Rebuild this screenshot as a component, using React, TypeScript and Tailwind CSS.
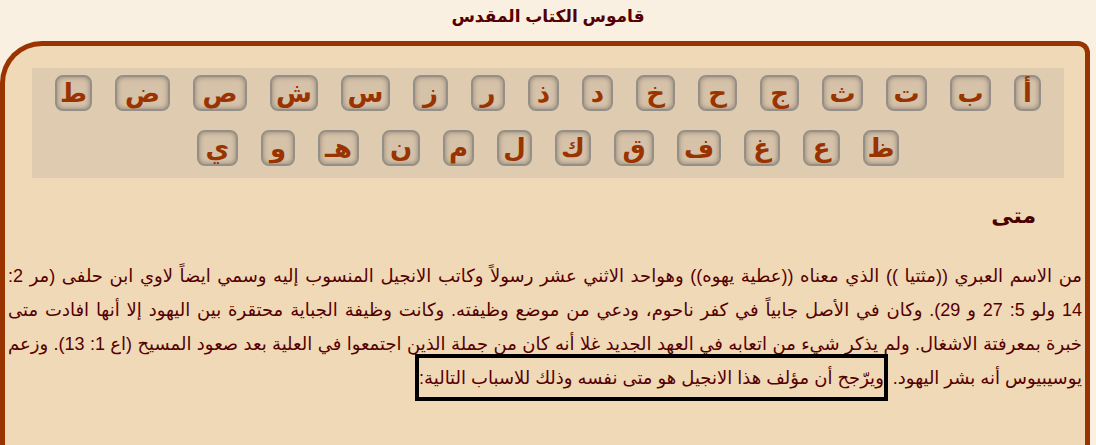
const row1: [string, number][] = [
  ["أ", 27],
  ["ب", 41],
  ["ت", 41],
  ["ث", 41],
  ["ج", 39],
  ["ح", 39],
  ["خ", 39],
  ["د", 31],
  ["ذ", 31],
  ["ر", 34],
  ["ز", 35],
  ["س", 49],
  ["ش", 48],
  ["ص", 54],
  ["ض", 55],
  ["ط", 37],
];

const row2: [string, number][] = [
  ["ظ", 36],
  ["ع", 37],
  ["غ", 36],
  ["ف", 44],
  ["ق", 40],
  ["ك", 36],
  ["ل", 35],
  ["م", 31],
  ["ن", 38],
  ["هـ", 41],
  ["و", 34],
  ["ي", 41],
];

function LetterRow({ letters }: { letters: [string, number][] }) {
  return (
    <div dir="rtl" className="flex justify-center gap-[23px]">
      {letters.map(([ch, w]) => (
        <a
          key={ch}
          href="#"
          style={{ width: w }}
          className="flex h-[36px] items-center justify-center rounded-[8px] border-2 border-[#959087] bg-[#d6c2a9] text-[26px] font-bold leading-none text-[#993300] shadow-[inset_0_0_5px_rgba(110,100,90,0.7)]"
        >
          {ch}
        </a>
      ))}
    </div>
  );
}

export default function App() {
  return (
    <div className="h-[445px] w-[1096px] overflow-hidden bg-[#faf0e1] font-['Liberation_Sans','DejaVu_Sans',sans-serif] text-[#550000]">
      <h1 dir="rtl" className="h-[41px] text-center text-[17px] font-bold leading-[34px]">
        قاموس الكتاب المقدس
      </h1>

      <div className="h-[420px] w-[1090px] rounded-tl-[42px] rounded-tr-[12px] border-[5px] border-b-0 border-[#993300] bg-[#f0d9b6]">
        <div className="ml-[27px] mt-[22px] flex w-[1032px] flex-col gap-[19px] bg-[#dfcbb0] pb-[12px] pt-[7px]">
          <LetterRow letters={row1} />
          <LetterRow letters={row2} />
        </div>

        <h2 dir="rtl" className="mt-[23px] pr-[49px] text-[22px] font-bold leading-[30px] text-[#4a0000]">
          متى
        </h2>

        <div dir="rtl" className="mt-[28px] px-[3px] text-[18px] leading-[34px]">
          <p className="whitespace-nowrap text-justify [text-align-last:justify]">
            من الاسم العبري ((مثتيا )) الذي معناه ((عطية يهوه)) وهواحد الاثني عشر رسولاً وكاتب الانجيل المنسوب إليه وسمي ايضاً لاوي ابن حلفى (مر 2:
          </p>
          <p className="whitespace-nowrap text-justify [text-align-last:justify]">
            14 ولو 5: 27 و 29). وكان في الأصل جابياً في كفر ناحوم، ودعي من موضع وظيفته. وكانت وظيفة الجباية محتقرة بين اليهود إلا أنها افادت متى
          </p>
          <p className="whitespace-nowrap text-justify [text-align-last:justify]">
            خبرة بمعرفتة الاشغال. ولم يذكر شيء من اتعابه في العهد الجديد غلا أنه كان من جملة الذين اجتمعوا في العلية بعد صعود المسيح (اع 1: 13). وزعم
          </p>
          <p className="whitespace-nowrap">
            يوسيبيوس أنه بشر اليهود.{" "}
            <span className="border-4 border-black pb-[9px] pt-[10px]">
              ويرّجح أن مؤلف هذا الانجيل هو متى نفسه وذلك للاسباب التالية:
            </span>
          </p>
        </div>
      </div>
    </div>
  );
}
